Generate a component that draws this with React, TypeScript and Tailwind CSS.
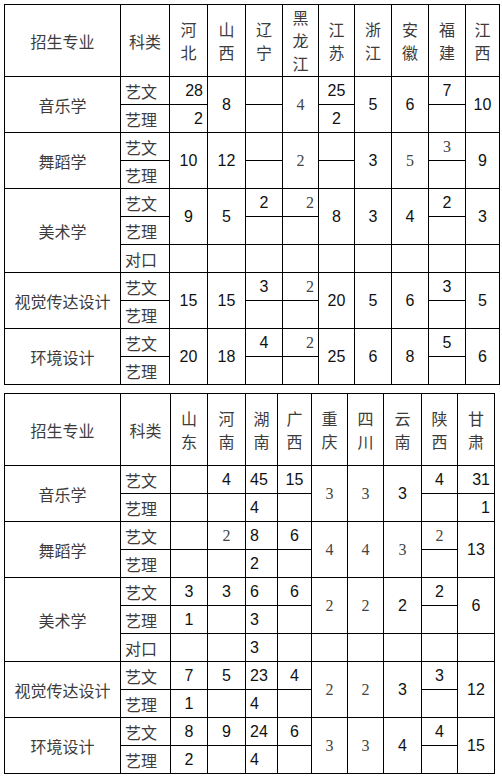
import React from "react";

type C = { t?: string; s?: number; a?: "l" | "c" | "r"; f?: "n" | "s" };

const N = (t: string, s = 1, a: "l" | "c" | "r" = "c"): C => ({ t, s, a, f: "n" });
const S = (t: string, s = 1, a: "l" | "c" | "r" = "c"): C => ({ t, s, a, f: "s" });
const E = (s = 1): C => ({ s });

type Group = { name: string; kinds: string[]; rows: C[][] };

const CJK = "font-['Noto_Sans_CJK_SC',sans-serif] text-[16px] text-[#3c3c3c]";

const alignCls = {
  l: "text-left pl-[4px]",
  c: "text-center",
  r: "text-right pr-[4px]",
};

const fontCls = {
  n: "font-['Liberation_Sans',Arial,sans-serif] text-[16px] text-[#111]",
  s: "font-['Liberation_Serif','Noto_Sans_CJK_SC',serif] text-[16px] text-[#444]",
};

const table1: Group[] = [
  {
    name: "音乐学",
    kinds: ["艺文", "艺理"],
    rows: [
      [N("28", 1, "r"), N("8", 2), E(), S("4", 2), N("25"), N("5", 2), N("6", 2), N("7"), N("10", 2)],
      [N("2", 1, "r"), E(), N("2"), E()],
    ],
  },
  {
    name: "舞蹈学",
    kinds: ["艺文", "艺理"],
    rows: [
      [N("10", 2), N("12", 2), E(), S("2", 2), E(), N("3", 2), S("5", 2), S("3"), N("9", 2)],
      [E(), E(), E()],
    ],
  },
  {
    name: "美术学",
    kinds: ["艺文", "艺理", "对口"],
    rows: [
      [N("9", 2), N("5", 2), N("2"), S("2", 1, "r"), N("8", 2), N("3", 2), N("4", 2), N("2"), N("3", 2)],
      [E(), E(), E()],
      [E(), E(), E(), E(), E(), E(), E(), E(), E()],
    ],
  },
  {
    name: "视觉传达设计",
    kinds: ["艺文", "艺理"],
    rows: [
      [N("15", 2), N("15", 2), N("3"), S("2", 1, "r"), N("20", 2), N("5", 2), N("6", 2), N("3"), N("5", 2)],
      [E(), E(), E()],
    ],
  },
  {
    name: "环境设计",
    kinds: ["艺文", "艺理"],
    rows: [
      [N("20", 2), N("18", 2), N("4"), S("2", 1, "r"), N("25", 2), N("6", 2), N("8", 2), N("5"), N("6", 2)],
      [E(), E(), E()],
    ],
  },
];

const table2: Group[] = [
  {
    name: "音乐学",
    kinds: ["艺文", "艺理"],
    rows: [
      [E(), N("4"), N("45", 1, "l"), N("15"), S("3", 2), S("3", 2), N("3", 2), N("4"), N("31", 1, "r")],
      [E(), E(), N("4", 1, "l"), E(), E(), N("1", 1, "r")],
    ],
  },
  {
    name: "舞蹈学",
    kinds: ["艺文", "艺理"],
    rows: [
      [E(), S("2"), N("8", 1, "l"), N("6"), S("4", 2), S("4", 2), S("3", 2), S("2"), N("13", 2)],
      [E(), E(), N("2", 1, "l"), E(), E()],
    ],
  },
  {
    name: "美术学",
    kinds: ["艺文", "艺理", "对口"],
    rows: [
      [N("3"), N("3"), N("6", 1, "l"), N("6"), S("2", 2), S("2", 2), N("2", 2), N("2"), N("6", 2)],
      [N("1"), E(), N("3", 1, "l"), E(), E()],
      [E(), E(), N("3", 1, "l"), E(), E(), E(), E(), E(), E()],
    ],
  },
  {
    name: "视觉传达设计",
    kinds: ["艺文", "艺理"],
    rows: [
      [N("7"), N("5"), N("23", 1, "l"), N("4"), S("2", 2), S("2", 2), N("3", 2), N("3"), N("12", 2)],
      [N("1"), E(), N("4", 1, "l"), E(), E()],
    ],
  },
  {
    name: "环境设计",
    kinds: ["艺文", "艺理"],
    rows: [
      [N("8"), N("9"), N("24", 1, "l"), N("6"), S("3", 2), S("3", 2), N("4", 2), N("4"), N("15", 2)],
      [N("2"), E(), N("4", 1, "l"), E(), E()],
    ],
  },
];

const widths1 = [116, 49, 38, 38, 37, 36, 36, 37, 37, 37, 34];
const widths2 = [116, 50, 37, 38, 32, 34, 36, 36, 38, 36, 37];

const provinces1 = ["河北", "山西", "辽宁", "黑龙江", "江苏", "浙江", "安徽", "福建", "江西"];
const provinces2 = ["山东", "河南", "湖南", "广西", "重庆", "四川", "云南", "陕西", "甘肃"];

function DataTable({
  groups,
  widths,
  provinces,
  tableW,
}: {
  groups: Group[];
  widths: number[];
  provinces: string[];
  tableW: string;
}) {
  return (
    <table className={`border-collapse table-fixed border border-black ${tableW}`}>
      <colgroup>
        {widths.map((w, i) => (
          <col key={i} style={{ width: w }} />
        ))}
      </colgroup>
      <tbody>
        <tr className="h-[72px]">
          <td className={`border border-black p-0 text-center ${CJK}`}>招生专业</td>
          <td className={`border border-black p-0 text-center ${CJK}`}>科类</td>
          {provinces.map((p) => (
            <td key={p} className={`border border-black p-0 ${CJK}`}>
              <div className="flex flex-col items-center">
                {p.split("").map((ch, i) => (
                  <span key={i} className="block h-[23px] leading-[23px]">
                    {ch}
                  </span>
                ))}
              </div>
            </td>
          ))}
        </tr>
        {groups.map((g) =>
          g.rows.map((row, ri) => (
            <tr key={g.name + ri} className="h-[28px]">
              {ri === 0 && (
                <td rowSpan={g.rows.length} className={`border border-black p-0 text-center whitespace-nowrap ${CJK}`}>
                  {g.name}
                </td>
              )}
              <td className={`border border-black p-0 pl-[4px] text-left leading-[26px] ${CJK}`}>{g.kinds[ri]}</td>
              {row.map((c, ci) => (
                <td
                  key={ci}
                  rowSpan={c.s ?? 1}
                  className={`border border-black p-0 leading-[20px] ${alignCls[c.a ?? "c"]} ${fontCls[c.f ?? "n"]}`}
                >
                  {c.t ?? ""}
                </td>
              ))}
            </tr>
          ))
        )}
      </tbody>
    </table>
  );
}

export default function App() {
  return (
    <div className="w-[502px] h-[780px] bg-white pl-[4px] pt-[4px] flex flex-col gap-[8px]">
      <DataTable groups={table1} widths={widths1} provinces={provinces1} tableW="w-[495px]" />
      <DataTable groups={table2} widths={widths2} provinces={provinces2} tableW="w-[490px]" />
    </div>
  );
}
